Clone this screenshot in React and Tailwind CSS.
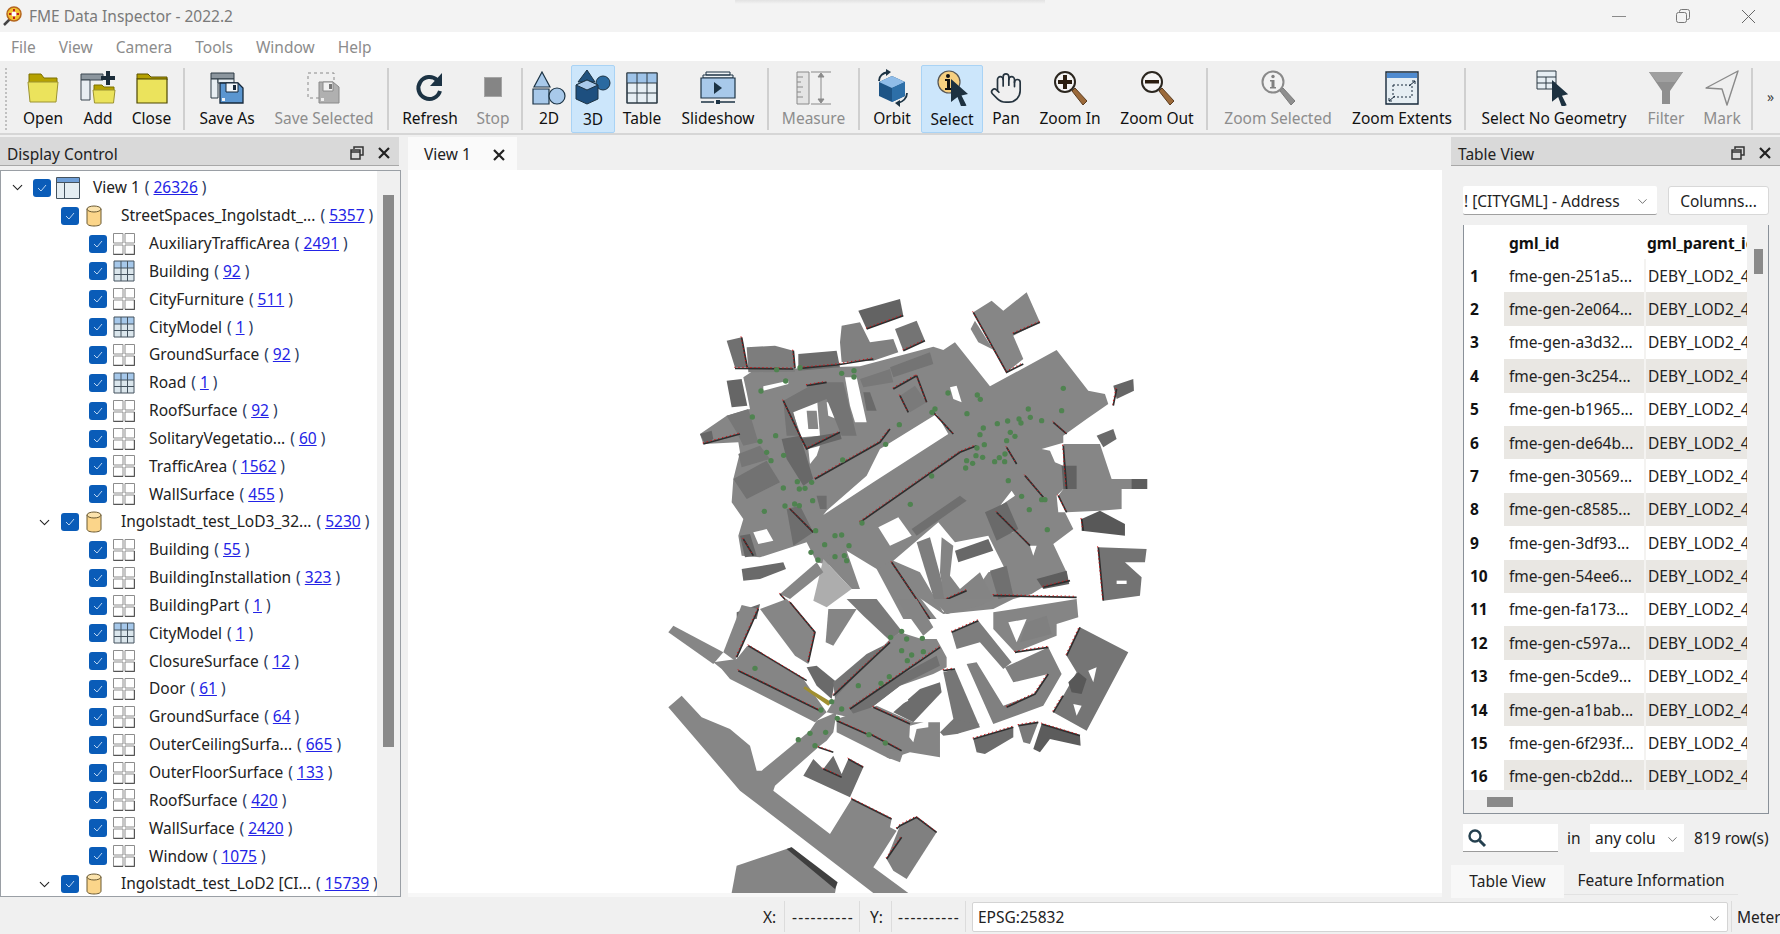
import { ChevronDown, Hand } from "lucide-react";

const dark = "#1c3344";

// toolbar icons
const FolderOpen = () => (
  <svg width="34" height="32" viewBox="0 0 34 32">
    <path d="M3 9V2h12l3 4h13v5H3z" fill="#b5a100" stroke="#7d7000" />
    <path d="M2 10h30l-2 20H4z" fill="#ebe35c" stroke="#9c9330" />
  </svg>
);
const FolderAdd = () => (
  <svg width="36" height="34" viewBox="0 0 36 34">
    <path d="M1 3h22v6H1z" fill="#8c969e" stroke="#3a4650" />
    <path d="M1 9h9v20H1z" fill="#e8eef2" stroke="#3a4650" />
    <path d="M14 18v-4h8l2 2h10v4H14z" fill="#b5a100" stroke="#7d7000" />
    <path d="M13 19h22l-1.5 13h-19z" fill="#ebe35c" stroke="#9c9330" />
    <path d="M26 0h4v5h5v4h-5v5h-4V9h-5V5h5z" fill="#1c2d3a" />
  </svg>
);
const FolderClose = () => (
  <svg width="32" height="32" viewBox="0 0 32 32">
    <path d="M1 7V2h11l3 3h16v3z" fill="#b5a100" stroke="#5c5200" />
    <path d="M1 7h30v24H1z" fill="#ebe35c" stroke="#4d4600" strokeWidth="1.2" />
  </svg>
);
const SaveAs = () => (
  <svg width="34" height="34" viewBox="0 0 34 34">
    <path d="M1 2h23v6H1z" fill="#8c969e" stroke="#2d3a45" />
    <path d="M1 8h7v19H1z" fill="#e8eef2" stroke="#2d3a45" />
    <path d="M8 8h16v4H8z" fill="#e8eef2" stroke="#2d3a45" />
    <path d="M10 12h18l5 5v15H10z" fill="#5b96d0" stroke="#16283a" strokeWidth="1.3" />
    <path d="M16 12h12v9H16z" fill="#f2f6f9" stroke="#16283a" />
    <path d="M23 14h3v5h-3z" fill="#16283a" />
    <path d="M12 27h3v3h-3z" fill="#eef3f7" />
  </svg>
);
const SaveSel = () => (
  <svg width="34" height="34" viewBox="0 0 34 34">
    <path d="M1 2h26v25H1z" fill="none" stroke="#8a8a8a" strokeDasharray="3 3" />
    <path d="M12 11h14l6 5v16H12z" fill="#b0b0b0" stroke="#8a8a8a" />
    <path d="M16 11h10v9H16z" fill="#f2f2f2" stroke="#8a8a8a" />
    <path d="M22 13h3v5h-3z" fill="#777" />
    <path d="M14 27h3v3h-3z" fill="#eee" />
  </svg>
);
const Refresh = () => (
  <svg width="30" height="32" viewBox="0 0 30 32">
    <path d="M22 8a11 11 0 1 0 3 11" fill="none" stroke={dark} strokeWidth="4" />
    <path d="M27 1v13H15z" fill={dark} />
  </svg>
);
const Stop = () => <div className="w-[18px] h-[20px] bg-[#858585] border border-[#a5a5a5] mt-[-2px]" />;
const Shapes = () => (
  <svg width="34" height="34" viewBox="0 0 34 34">
    <path d="M10 1l8 15H2z" fill="#a8c9ea" stroke={dark} strokeWidth="1.2" />
    <path d="M1 18h16v15H1z" fill="#a8c9ea" stroke={dark} strokeWidth="1.2" />
    <circle cx="25" cy="25" r="8" fill="#a8c9ea" stroke={dark} strokeWidth="1.2" />
  </svg>
);
const Shapes3d = () => (
  <svg width="36" height="36" viewBox="0 0 36 36">
    <path d="M12 1l8 12H3z" fill="#20527f" stroke={dark} />
    <circle cx="28" cy="14" r="7" fill="#2a6aa0" stroke={dark} />
    <path d="M12 11l11 5v14l-11 5-11-5V16z" fill="#1d4f7f" stroke={dark} />
    <path d="M12 11l11 5-11 5-11-5z" fill="#a8c9ea" stroke={dark} />
  </svg>
);
const TableIcon = () => (
  <svg width="32" height="32" viewBox="0 0 32 32">
    <path d="M1 1h30v30H1z" fill="#e6eef3" stroke="#2d3a45" strokeWidth="1.2" />
    <path d="M1 1h30v10H1z" fill="#9ec3e8" />
    <path d="M1 11h30M1 21h30M11 1v30M21 1v30M1 1h30v30H1z" fill="none" stroke="#2d3a45" />
  </svg>
);
const Slideshow = () => (
  <svg width="36" height="34" viewBox="0 0 36 34">
    <path d="M6 1h24v3H6zM3 4h30v3H3z" fill="#eef2f5" stroke="#1c3344" />
    <path d="M1 7h34v20H1z" fill="#a8c9ea" stroke="#1c3344" strokeWidth="1.2" />
    <path d="M14 11l8 6-8 6z" fill="#1c3344" />
    <path d="M1 31h13M20 31h15" stroke="#1c3344" strokeWidth="1.4" />
    <path d="M16 29h4v4h-4z" fill="#1c3344" />
  </svg>
);
const Measure = () => (
  <svg width="36" height="34" viewBox="0 0 36 34" stroke="#8a8a8a" fill="none">
    <path d="M1 1h12v32H1z" fill="#e4e4e4" />
    <path d="M1 6h6M1 11h4M1 16h6M1 21h4M1 26h6" />
    <path d="M15 1h20M15 33h20M25 3v28" />
    <path d="M22 6l3-4 3 4zM22 28l3 4 3-4z" fill="#8a8a8a" />
  </svg>
);
const Orbit = () => (
  <svg width="34" height="38" viewBox="0 0 34 38">
    <path d="M17 7l13 6v14l-13 6-13-6V13z" fill="#1d5486" />
    <path d="M17 7l13 6-13 6-13-6z" fill="#8fbce8" />
    <path d="M17 19l13-6v14l-13 6z" fill="#2d6fa8" />
    <path d="M4 12c0-5 4-8 9-9" fill="none" stroke={dark} strokeWidth="1.8" />
    <path d="M11 0l5 3-5 4z" fill={dark} />
    <path d="M32 24c0 5-4 9-9 10" fill="none" stroke={dark} strokeWidth="1.8" />
    <path d="M25 31l-5 3 5 4z" fill={dark} />
  </svg>
);
const Cursor = ({ x, y, s = 1 }) => (
  <path transform={`translate(${x} ${y}) scale(${s})`} d="M0 0l17 15-6.500 1.500 5 10-5 2-4-10.500-6.500 5z" fill="#1d3140" />
);
const SelectIcon = () => (
  <svg width="34" height="38" viewBox="0 0 34 38">
    <circle cx="14" cy="14" r="11" fill="#f6cf80" stroke="#555" strokeWidth="1.2" />
    <circle cx="13" cy="8" r="2" fill="#111" />
    <path d="M10 11h5v9h2v2h-7v-2h2v-7h-2z" fill="#111" />
    <Cursor x={16} y={11} />
  </svg>
);
const Glass = ({ sign }) => (
  <svg width="34" height="36" viewBox="0 0 34 36">
    <path d="M19 21l3-3 12 13-4 4z" fill="#9c6a3a" stroke="#5c3d20" />
    <circle cx="12" cy="12" r="10" fill="#f4f4f4" stroke="#2b261f" strokeWidth="2" />
    <path d={sign === "+" ? "M10 5h4v5h5v4h-5v5h-4v-5H5v-4h5z" : "M5 10h14v3.500H5z"} fill="#2b1d10" />
  </svg>
);
const GlassInfo = () => (
  <svg width="34" height="36" viewBox="0 0 34 36">
    <path d="M19 21l3-3 12 13-4 4z" fill="#8f8f8f" stroke="#7a7a7a" />
    <circle cx="12" cy="12" r="10.500" fill="#f2f2f2" stroke="#8a8a8a" strokeWidth="2" />
    <circle cx="12" cy="6.500" r="1.700" fill="#808080" />
    <path d="M9 10h4.500v7H15v1.500H9V17h1.500v-5.500H9z" fill="#808080" />
  </svg>
);
const Extents = () => (
  <svg width="34" height="34" viewBox="0 0 34 34">
    <path d="M1 1h32v32H1z" fill="#e6eef3" stroke="#16283a" strokeWidth="1.4" />
    <path d="M2 2h30v5H2z" fill="#4f8bd0" />
    <path d="M8 14h19v12H8z" fill="none" stroke="#16283a" strokeDasharray="2 2" />
    <path d="M24 15l6-5M27 10h3v3M10 25l-6 5M4 27v3h3" fill="none" stroke="#16283a" />
  </svg>
);
const NoGeom = () => (
  <svg width="36" height="36" viewBox="0 0 36 36">
    <path d="M1 1h19v18H1z" fill="#e6eef3" stroke="#2d3a45" />
    <path d="M1 7h19M1 13h19M10 7v12" stroke="#2d3a45" fill="none" />
    <Cursor x={16} y={10} s={0.95} />
  </svg>
);
const Funnel = () => (
  <svg width="34" height="34" viewBox="0 0 34 34">
    <path d="M0 1h34L21 20v13h-8V20z" fill="#8f8f8f" />
    <path d="M0 1h34l-8 10H8z" fill="#a0a0a0" />
  </svg>
);
const Mark = () => (
  <svg width="34" height="36" viewBox="0 0 34 36">
    <path d="M33 1L1 18l16 1 5 16z" fill="#efefef" stroke="#8a8a8a" strokeWidth="1.4" strokeLinejoin="round" />
  </svg>
);

const Sep = ({ className }) => (
  <div className={`flex justify-center shrink-0 ${className}`}>
    <div className="w-[2px] h-[62px] mt-[6px] bg-[#cfcfcf]" />
  </div>
);

const ToolButton = ({ label, icon, className, off, active }) => (
  <div className={`shrink-0 h-[68px] mt-[3px] flex flex-col items-center ${className} ${active ? "bg-[#cce6fb] border border-[#a9d3f5] rounded-[2px] pt-[2px]" : "pt-[3px] border border-transparent"}`}>
    <div className="h-[38px] flex items-center justify-center">{icon}</div>
    <span className={`text-[15.5px] leading-[22px] whitespace-nowrap ${active ? "mt-[2px]" : "mt-[0px]"} ${off ? "text-[#8d8d8d]" : "text-[#111]"}`}>{label}</span>
  </div>
);

const Toolbar = () => (
  <div className="h-[73px] flex bg-[#f0f0f0] border-b-2 border-[#d6d6d6] mt-[1px]">
    <div className="w-[18px] shrink-0 pl-[5px] pt-[6px]">
      <div className="h-[62px] w-0 border-l-2 border-dotted border-[#c0c0c0]" />
    </div>
    <ToolButton label="Open" icon={<FolderOpen />} className="w-[50px]" />
    <ToolButton label="Add" icon={<FolderAdd />} className="w-[60px]" />
    <ToolButton label="Close" icon={<FolderClose />} className="w-[47px]" />
    <Sep className="w-[18px]" />
    <ToolButton label="Save As" icon={<SaveAs />} className="w-[68px]" />
    <ToolButton label="Save Selected" icon={<SaveSel />} off className="w-[126px]" />
    <Sep className="w-[2px]" />
    <ToolButton label="Refresh" icon={<Refresh />} className="w-[82px]" />
    <ToolButton label="Stop" icon={<Stop />} off className="w-[44px]" />
    <Sep className="w-[14px]" />
    <ToolButton label="2D" icon={<Shapes />} className="w-[40px]" />
    <ToolButton label="3D" icon={<Shapes3d />} active className="w-[44px] ml-[2px]" />
    <ToolButton label="Table" icon={<TableIcon />} className="w-[54px]" />
    <ToolButton label="Slideshow" icon={<Slideshow />} className="w-[98px]" />
    <Sep className="w-[2px]" />
    <ToolButton label="Measure" icon={<Measure />} off className="w-[89px]" />
    <Sep className="w-[2px]" />
    <ToolButton label="Orbit" icon={<Orbit />} className="w-[58px] ml-[3px]" />
    <ToolButton label="Select" icon={<SelectIcon />} active className="w-[62px]" />
    <ToolButton label="Pan" icon={<Hand size={34} strokeWidth={1.2} color="#26343f" />} className="w-[46px]" />
    <ToolButton label="Zoom In" icon={<Glass sign="+" />} className="w-[82px]" />
    <ToolButton label="Zoom Out" icon={<Glass sign="-" />} className="w-[92px]" />
    <Sep className="w-[8px]" />
    <ToolButton label="Zoom Selected" icon={<GlassInfo />} off className="w-[134px]" />
    <ToolButton label="Zoom Extents" icon={<Extents />} className="w-[114px]" />
    <Sep className="w-[12px]" />
    <ToolButton label="Select No Geometry" icon={<NoGeom />} className="w-[166px]" />
    <ToolButton label="Filter" icon={<Funnel />} off className="w-[58px]" />
    <ToolButton label="Mark" icon={<Mark />} off className="w-[54px]" />
    <Sep className="w-[6px]" />
    <div className="flex-1 text-[14px] text-[#444] pt-[24px] pl-[12px]">»</div>
  </div>
);

// panel header, same for both docks
const DockButtons = () => (
  <div className="flex items-center gap-[14px]">
    <svg width="14" height="14" viewBox="0 0 14 14" fill="none" stroke="#333" strokeWidth="1.5">
      <path d="M4 3V1h9v8h-3" />
      <path d="M1 4h9v9H1z" />
      <path d="M1 6h9" />
    </svg>
    <svg width="12" height="12" viewBox="0 0 12 12" stroke="#222" strokeWidth="2.200">
      <path d="M1 1l10 10M11 1L1 11" />
    </svg>
  </div>
);

const DockHeader = ({ title }) => (
  <div className="h-[29px] bg-[#d9d9d9] border-b border-[#a8a8a8] flex items-center justify-between pt-[4px] pl-[7px] pr-[9px] text-[15.5px] text-[#222]">
    <span className="mt-[3px]">{title}</span>
    <DockButtons />
  </div>
);

const CheckBox = () => (
  <div className="w-[18px] h-[18px] shrink-0 rounded-[3px] bg-[#0a5cb8] flex items-center justify-center">
    <svg width="10" height="8" viewBox="0 0 10 8" fill="none" stroke="#bcd6f2" strokeWidth="1">
      <path d="M1 4l3 3 5-6" />
    </svg>
  </div>
);

const GridIcon = ({ filled }) =>
  filled ? (
    <svg width="22" height="22" viewBox="0 0 22 22">
      <path d="M1 1h20v20H1z" fill="#dbe6ec" />
      <path d="M1 1h20v7H1z" fill="#a6c8ea" />
      <path d="M1 1h20v20H1zM1 8h20M1 14.500h20M8 1v20M14.500 1v20" fill="none" stroke="#44525e" />
    </svg>
  ) : (
    <svg width="22" height="22" viewBox="0 0 22 22" fill="none" stroke="#8d8d8d">
      <path d="M.5.5h9.500v9.500H.5zM12 .5h9.500v9.500H12zM.5 12H10v9.500H.5zM12 12h9.500v9.500H12z" />
      <path d="M.5 21.500H10M12 21.500h9.500M21.500 12v9.500" stroke="#555" strokeWidth="1.400" />
    </svg>
  );

const ViewIcon = () => (
  <svg width="24" height="22" viewBox="0 0 24 22">
    <path d="M.5.5h23v21H.5z" fill="#e4edf2" stroke="#44525e" />
    <path d="M1 1h22v4H1z" fill="#6f9fd8" />
    <path d="M1 5.500h22M8.500 5.500V21" stroke="#44525e" fill="none" />
  </svg>
);

const DbIcon = () => (
  <svg width="16" height="22" viewBox="0 0 16 22">
    <path d="M1 4v14c0 2 3 3 7 3s7-1 7-3V4z" fill="#fbd58a" stroke="#6b5a33" />
    <ellipse cx="8" cy="4" rx="7" ry="3" fill="#fbe3ad" stroke="#6b5a33" />
  </svg>
);

const Count = ({ n }) => (
  <span className="text-[#2a3a5c] pl-[5px]">
    {"( "}
    <span className="text-[#2323e6] underline">{n}</span>
    {" )"}
  </span>
);

const TreeRow = ({ level, name, n, arrow, icon }) => (
  <div className="h-[27.85px] flex items-center whitespace-nowrap">
    <div className={`shrink-0 flex justify-center ${level === 0 ? "w-[32px]" : level === 1 ? "w-[60px] pl-[26px]" : "w-[88px]"}`}>
      {arrow && <ChevronDown size={17} strokeWidth={1.5} color="#222" />}
    </div>
    <CheckBox />
    <div className={`shrink-0 flex justify-center w-[42px] ${level === 1 ? "pr-[13px]" : "pr-[9px]"}`}>{icon}</div>
    <span className="text-[#222]">{name}</span>
    <Count n={n} />
  </div>
);

const groups = [
  { name: "StreetSpaces_Ingolstadt_...", n: "5357", arrow: false, items: [
    ["AuxiliaryTrafficArea", "2491"], ["Building", "92", 1], ["CityFurniture", "511"], ["CityModel", "1", 1],
    ["GroundSurface", "92"], ["Road", "1", 1], ["RoofSurface", "92"], ["SolitaryVegetatio...", "60"],
    ["TrafficArea", "1562"], ["WallSurface", "455"],
  ] },
  { name: "Ingolstadt_test_LoD3_32...", n: "5230", arrow: true, items: [
    ["Building", "55"], ["BuildingInstallation", "323"], ["BuildingPart", "1"], ["CityModel", "1", 1],
    ["ClosureSurface", "12"], ["Door", "61"], ["GroundSurface", "64"], ["OuterCeilingSurfa...", "665"],
    ["OuterFloorSurface", "133"], ["RoofSurface", "420"], ["WallSurface", "2420"], ["Window", "1075"],
  ] },
  { name: "Ingolstadt_test_LoD2 [CI...", n: "15739", arrow: true, items: [] },
];

const DisplayControl = () => (
  <div className="w-[401px] shrink-0 flex flex-col">
    <div className="pr-[2px]">
      <DockHeader title="Display Control" />
    </div>
    <div className="mt-[4px] h-[727px] bg-white border border-[#9a9fa5] flex overflow-hidden text-[15.5px]">
      <div className="w-[376px] pt-[3px] overflow-hidden">
        <TreeRow level={0} name="View 1" n="26326" arrow icon={<ViewIcon />} />
        {groups.map((g) => (
          <div key={g.name}>
            <TreeRow level={1} name={g.name} n={g.n} arrow={g.arrow} icon={<DbIcon />} />
            {g.items.map(([name, n, filled]) => (
              <TreeRow key={name + n} level={2} name={name} n={n} icon={<GridIcon filled={filled} />} />
            ))}
          </div>
        ))}
      </div>
      <div className="flex-1 bg-[#f0f0f0] pt-[24px] pl-[6px]">
        <div className="w-[11px] h-[552px] bg-[#8a8a8a]" />
      </div>
    </div>
  </div>
);

// ---- map, authored in crop coordinates (3x), two sheets
const streetsA = "250,295 275,278 420,268 600,262 820,203 850,213 885,190 990,322 1190,213 1285,335 1335,345 1345,375 1280,420 1210,470 1210,630 1190,650 1240,750 1180,795 1220,880 1115,945 1060,960 1000,990 850,1005 650,870 560,815 520,860 470,850 440,790 300,835 245,830 235,770 250,720 215,670 220,600 240,520 235,490 130,495 120,465 200,410 270,390 260,340";

const holesA = [
  "310,322 385,305 385,315 310,335",
  "395,392 470,345 480,470 425,475",
  "660,510 830,405 865,465 640,610 490,708 500,695 620,590",
  "555,295 590,295 620,430 585,430 570,380",
  "445,510 480,500 470,530 450,555",
  "655,745 715,715 755,770 690,800",
  "700,845 835,730 885,790 985,770 1015,830 1035,870 985,880 950,930 880,945 850,1000 780,880",
  "1005,700 1055,635 1065,650 985,705",
  "1145,510 1215,490 1210,560 1185,550 1170,515",
  "1290,430 1375,400 1380,450 1340,470 1300,460",
  "280,760 320,750 340,785 295,795",
  "1040,730 1060,720 1060,760 1040,760",
  "1110,800 1130,800 1120,830",
  "870,325 890,320 905,370 880,360",
  "500,370 535,370 530,420 505,410",
  "1190,650 1215,645 1220,700 1195,700",
];

const bldgA = [
  ["#636363", "595,95 720,60 730,110 620,150"],
  ["#808080", "545,140 600,130 630,190 700,180 715,220 640,245 545,250 540,190"],
  ["#747474", "705,150 770,125 795,185 730,215"],
  ["#868686", "940,100 995,65 1030,95 1100,40 1140,130 1060,170 1090,240 1040,280"],
  ["#868686", "932,150 945,125 1000,212 955,190"],
  ["#707070", "200,185 245,175 262,265 225,265"],
  ["#7d7d7d", "260,205 345,200 400,215 405,278 265,280"],
  ["#6c6c6c", "415,225 530,215 540,265 415,275"],
  ["#666666", "200,305 245,300 262,380 215,385"],
  ["#666666", "120,465 155,455 160,480 135,495"],
  ["#777777", "200,410 265,390 295,490 250,500 230,460"],
  ["#767676", "235,525 300,500 330,540 245,565"],
  ["#727272", "220,600 320,545 360,610 260,660"],
  ["#686868", "365,480 420,470 460,600 430,620 380,540"],
  ["#747474", "370,365 470,310 550,310 590,470 545,470 500,360 400,400 420,470 380,470"],
  ["#868686", "440,395 470,395 475,450 445,450"],
  ["#787878", "600,300 690,270 700,310 610,325"],
  ["#747474", "690,265 810,220 820,255 700,295"],
  ["#6a6a6a", "610,340 630,340 650,395 620,395"],
  ["#7a7a7a", "720,350 765,320 800,370 750,400"],
  ["#666666", "420,480 540,460 545,480 440,510"],
  ["#6d6d6d", "470,650 500,650 500,690 480,690"],
  ["#6e6e6e", "380,690 420,680 460,760 400,800"],
  ["#666666", "240,770 270,765 290,830 255,835"],
  ["#6a6a6a", "245,870 370,850 378,870 300,900 250,905"],
  ["#868686", "1210,495 1320,495 1355,600 1460,600 1460,630 1385,630 1385,690 1320,695 1220,700 1195,650 1210,630"],
  ["#626262", "1205,560 1250,560 1250,630 1210,630"],
  ["#5d5d5d", "1415,600 1462,600 1462,630 1415,630"],
  ["#585858", "1265,720 1320,695 1395,735 1395,770 1265,755"],
  ["#737373", "1315,805 1460,810 1455,850 1395,850 1445,895 1440,950 1330,965"],
  ["#ffffff", "1370,905 1400,905 1400,915 1370,915"],
  ["#666666", "1360,320 1420,300 1422,335 1370,360"],
  ["#6a6a6a", "1310,470 1360,450 1370,480 1330,505"],
  ["#6a6a6a", "975,700 1040,670 1075,750 1010,785"],
  ["#686868", "885,815 985,780 1000,815 895,850"],
  ["#7e7e7e", "770,790 810,775 860,960 825,970"],
  ["#848484", "845,775 880,800 870,890 900,930 960,880 1000,960 860,1005 840,880"],
  ["#707070", "990,875 1040,860 1060,950 1015,960"],
  ["#5e5e5e", "1130,900 1220,875 1228,915 1150,930"],
  ["#868686", "500,830 560,815 600,930 575,930 490,840"],
  ["#adadad", "460,965 490,840 575,930 500,985"],
  ["#868686", "360,945 470,850 490,880 390,960"],
  ["#868686", "650,870 695,845 830,1020 730,1020"],
  ["#6f6f6f", "755,750 900,650 920,665 770,770"],
  ["#6a6a6a", "230,1000 300,975 290,1020 230,1020"],
];

const edgesA = [
  "940,100 1040,280 1090,255",
  "1060,165 1140,130",
  "245,175 262,265",
  "225,268 400,270",
  "400,215 405,268",
  "420,268 530,258 640,240",
  "620,150 730,110",
  "730,215 795,185",
  "370,365 420,470 440,510 540,460",
  "440,320 500,310",
  "465,600 660,490 690,450",
  "600,730 900,520 950,500",
  "130,495 240,465",
  "720,350 745,400",
  "770,290 800,370",
  "700,330 770,290",
  "820,400 880,465",
  "1040,505 1070,555",
  "1095,590 1150,655",
  "1195,650 1220,700",
  "1010,700 1110,800",
  "840,970 920,935",
  "1000,950 1250,955",
  "1210,500 1220,630",
  "1315,805 1330,965",
  "1265,720 1270,755",
  "250,780 280,830",
  "390,690 460,760",
  "1180,430 1220,465",
  "1370,330 1360,380",
  "1150,925 1230,905",
  "695,850 810,1020",
  "360,945 430,1020",
];

const dotsA = [
  [350,272],[420,266],[545,283],[582,275],[582,294],[377,306],[303,336],[277,414],[347,470],[300,487],[371,529],[333,545],[320,520],
  [412,608],[418,630],[435,628],[455,610],[370,627],[375,681],[404,675],[418,680],[313,697],[458,665],[467,755],[525,770],[545,768],
  [494,797],[453,820],[474,843],[525,833],[553,830],[560,845],[567,800],[606,732],[751,676],[815,591],[548,543],[677,496],[718,437],
  [816,400],[825,390],[864,342],[921,404],[952,348],[961,361],[970,447],[960,467],[1012,434],[1043,426],[1077,420],[1083,432],[1111,415],
  [1105,390],[1145,425],[1205,395],[1210,328],[1051,460],[1065,472],[1040,485],[973,497],[951,507],[968,535],[948,530],[938,553],
  [920,545],[917,567],[1004,548],[1018,536],[1035,525],[1034,548],[1045,605],[1085,652],[1108,692],[1145,662],[1155,662],[1162,752],
];

const bldgB = [
  ["#868686", "25,100 40,80 190,160 160,195"],
  ["#868686", "190,160 245,18 295,30 225,185"],
  ["#868686", "300,30 380,0 390,10 465,100 445,195 405,170"],
  ["#858585", "160,190 230,180 262,140 430,240 500,340 465,370 210,240 185,210"],
  ["#868686", "25,325 65,290 125,355 210,390 270,440 290,515 305,515 450,395 470,365 530,340 520,400 500,425 480,440 345,560 340,575 510,705 575,600 695,660 690,685 710,695 640,805 745,882 640,882 240,575"],
  ["#858585", "215,882 230,800 395,745 530,855 525,882"],
  ["#3f3f3f", "380,750 395,745 533,850 525,870"],
  ["#808080", "680,780 720,680 770,655 830,700 740,840 700,815"],
  ["#6c6c6c", "430,530 460,480 490,510 520,470 545,525 565,480 610,505 570,595"],
  ["#6a6a6a", "440,205 470,200 525,245 515,300 470,260"],
  ["#757575", "520,250 620,165 690,130 720,150 600,260 525,300"],
  ["#7a7a7a", "560,0 650,0 725,95 690,125 610,50"],
  ["#868686", "500,340 530,290 690,120 720,100 785,120 830,120 860,175 860,205 820,225 720,260 590,360"],
  ["#707070", "570,330 700,240 830,170 840,200 720,260 590,360"],
  ["#858585", "530,360 650,320 760,370 840,370 840,475 750,460 690,480 530,400"],
  ["#858585", "680,450 730,460 720,490 680,475"],
  ["#6d6d6d", "700,340 780,270 840,250 845,280 760,370"],
  ["#858585", "815,0 1000,0 960,20 860,45"],
  ["#858585", "710,0 770,0 820,85 790,110"],
  ["#858585", "505,30 590,30 520,140 497,130"],
  ["#7d7d7d", "875,100 955,65 1055,190 1030,210 960,130 890,150"],
  ["#858585", "1000,40 1250,0 1255,55 1190,75 1190,110 1065,160 1000,90"],
  ["#ffffff", "1045,70 1100,60 1070,130"],
  ["#808080", "1100,70 1160,50 1175,105 1080,130"],
  ["#808080", "920,195 950,190 1030,320 1125,285 1165,225 1060,250 1035,205 1165,145 1205,225 1150,320 1000,375"],
  ["#767676", "850,220 885,210 960,385 890,405"],
  ["#6c6c6c", "940,420 1060,385 1060,415 975,465 950,460"],
  ["#7a7a7a", "1075,380 1135,370 1110,435 1090,430"],
  ["#5c5c5c", "1120,450 1145,375 1260,410 1262,440 1170,420 1140,460"],
  ["#757575", "1220,170 1260,85 1405,160 1280,395 1180,340 1210,290 1250,220"],
  ["#585858", "1225,250 1255,220 1280,240 1265,285 1235,280"],
  ["#ffffff", "1285,215 1310,205 1300,250"],
  ["#ffffff", "1240,315 1265,320 1250,350"],
  ["#ffffff", "750,380 805,365 805,385 770,390 760,430 748,415"],
  ["#ffffff", "705,290 730,275 745,305 725,315"],
  ["#767676", "840,400 880,360 960,375 890,405 850,410"],
  ["#a08f30", "430,268 435,262 515,310 505,320"],
];

const edgesB = [
  "295,30 230,175",
  "390,10 465,100 445,190",
  "265,140 440,245",
  "235,215 480,335",
  "530,365 620,405",
  "520,290 690,130",
  "570,330 840,145",
  "640,325 750,375",
  "850,215 885,210",
  "875,100 955,65",
  "1065,160 1165,145",
  "1040,325 1125,285 1165,225",
  "940,420 1060,385",
  "1075,380 1135,370",
  "1145,375 1260,410",
  "1220,170 1260,85",
  "1180,340 1210,290",
  "575,600 695,660",
  "710,690 720,680 770,655 830,700",
  "680,780 725,715",
  "490,510 545,535",
  "565,480 610,505",
  "475,445 520,460",
  "630,405 725,455",
];

const dotsB = [
  [725,97],[692,115],[740,120],[787,118],[725,155],[790,158],[755,168],[742,185],[688,233],[663,253],[595,260],[515,308],[545,330],[483,333],
  [532,358],[497,400],[450,403],[415,422],[465,440],[627,407],[676,432],[285,208],
];

const MapSheet = ({ x, y, streets, holes = [], bldg, edges, dots }) => (
  <g transform={`translate(${x} ${y}) scale(0.3333)`}>
    {streets && <polygon points={streets} fill="#868686" />}
    {holes.map((p) => <polygon key={p} points={p} fill="#fff" />)}
    {bldg.map(([c, p]) => <polygon key={p} points={p} fill={c} />)}
    {edges.map((p) => <polyline key={p} points={p} fill="none" stroke="#2e2e2e" strokeWidth="5" />)}
    {edges.map((p) => <polyline key={p + "r"} points={p} transform="translate(-2 -3)" fill="none" stroke="#d01418" strokeWidth="3" strokeDasharray="4 8" />)}
    {dots.map(([cx, cy]) => <circle key={cx + "-" + cy} cx={cx} cy={cy} r="8" fill="#4f8350" />)}
  </g>
);

const CityMap = () => (
  <svg className="block w-full h-full" viewBox="408 171 1034 723">
    <MapSheet x={660} y={280} streets={streetsA} holes={holesA} bldg={bldgA} edges={edgesA} dots={dotsA} />
    <MapSheet x={660} y={600} bldg={bldgB} edges={edgesB} dots={dotsB} />
  </svg>
);

const CenterView = () => (
  <div className="w-[1034px] ml-[7px] shrink-0 flex flex-col">
    <div className="h-[33px] w-[109px] bg-[#fafafa] flex items-center pl-[16px] pt-[2px] text-[15.5px] text-[#222]">
      <span className="w-[69px]">View 1</span>
      <svg width="12" height="12" viewBox="0 0 12 12" stroke="#222" strokeWidth="2.200">
        <path d="M1 1l10 10M11 1L1 11" />
      </svg>
    </div>
    <div className="h-[723px] bg-white">
      <CityMap />
    </div>
    <div className="h-[4px] bg-[#f7f7f7]" />
  </div>
);

const rows = [
  "251a5", "2e064", "a3d32", "3c254", "b1965", "de64b", "30569", "c8585",
  "3df93", "54ee6", "fa173", "c597a", "5cde9", "a1bab", "6f293f", "cb2dd",
];

const TableView = () => (
  <div className="w-[329px] shrink-0 ml-[9px] flex flex-col text-[15.5px] text-[#222]">
    <DockHeader title="Table View" />
    <div className="pl-[12px] pr-[11px] flex-1 flex flex-col">
      <div className="flex mt-[20px] h-[29px] gap-[11px]">
        <div className="w-[194px] bg-white border-b border-[#a0a0a0] flex items-center justify-between pt-[3px] pr-[7px] rounded-[2px] overflow-hidden">
          <span className="whitespace-nowrap pl-[1px]">! [CITYGML] - Address</span>
          <ChevronDown size={15} strokeWidth={1.3} color="#555" className="shrink-0" />
        </div>
        <div className="flex-1 bg-white border border-[#d8d8d8] rounded-[3px] flex items-center justify-center pt-[2px]">Columns...</div>
      </div>
      <div className="mt-[10px] h-[589px] border-x border-b border-[#8a9199] flex flex-col">
        <div className="flex h-[565px]">
          <div className="w-[283px] bg-white">
            <div className="h-[34px] flex items-center font-bold text-[#111] pt-[4px]">
              <div className="w-[40px] shrink-0" />
              <div className="w-[140px] shrink-0 pl-[5px]">gml_id</div>
              <div className="w-[103px] shrink-0 pl-[3px] overflow-hidden whitespace-nowrap">gml_parent_id</div>
            </div>
            {rows.map((r, i) => (
              <div key={r} className="h-[33.4px] flex items-center">
                <div className="w-[40px] shrink-0 pl-[6px] pt-[1px] font-bold text-[#111]">{i + 1}</div>
                <div className={`w-[243px] shrink-0 h-full flex items-center overflow-hidden ${i % 2 ? "bg-[#e9e7e3]" : "bg-white"}`}>
                  <div className="w-[140px] pl-[5px] pt-[1px] shrink-0 whitespace-nowrap">fme-gen-{r}...</div>
                  <div className="w-[103px] pl-[2px] pt-[1px] shrink-0 h-full flex items-center border-l-2 border-[#f4f3f1] overflow-hidden whitespace-nowrap">DEBY_LOD2_4906</div>
                </div>
              </div>
            ))}
          </div>
          <div className="flex-1 bg-[#f0f0f0] pl-[7px] pt-[24px]">
            <div className="w-[9px] h-[25px] bg-[#8a8a8a]" />
          </div>
        </div>
        <div className="flex-1 bg-[#f0f0f0] pl-[23px] pt-[7px]">
          <div className="w-[26px] h-[10px] bg-[#8a8a8a]" />
        </div>
      </div>
      <div className="flex items-center mt-[10px] h-[28px] whitespace-nowrap">
        <div className="w-[95px] h-full bg-white border-b border-[#9a9a9a] flex items-center pl-[4px]">
          <svg width="20" height="20" viewBox="0 0 20 20" fill="none" stroke="#25404f" strokeWidth="2.400">
            <circle cx="8" cy="8" r="5.500" />
            <path d="M12.500 12.500L18 18" strokeWidth="3" />
          </svg>
        </div>
        <span className="ml-[9px] w-[23px] pt-[2px]">in</span>
        <div className="w-[94px] h-full bg-white flex items-center justify-between pl-[5px] pr-[4px] pt-[2px]">
          <span>any colu</span>
          <ChevronDown size={15} strokeWidth={1.3} color="#555" />
        </div>
        <span className="ml-[10px] pt-[2px]">819 row(s)</span>
      </div>
    </div>
    <div className="flex h-[33px] mt-[13px]">
      <div className="w-[113px] bg-[#f8f8f8] flex items-center justify-center pt-[1px]">Table View</div>
      <div className="w-[174px] h-[30px] bg-[#f0f0f0] border-b border-[#e2e2e2] flex items-center justify-center pt-[3px]">Feature Information</div>
    </div>
  </div>
);

const StatusBar = () => (
  <div className="flex h-[35px] items-center text-[15.5px] text-[#222] whitespace-nowrap overflow-hidden">
    <div className="w-[763px] shrink-0" />
    <span className="w-[21px] shrink-0 pt-[3px]">X:</span>
    <div className="w-[76px] shrink-0 h-[31px] flex items-center border-x border-[#dcdcdc] pl-[7px] pt-[3px] tracking-[1.2px]">----------</div>
    <span className="w-[31px] shrink-0 pl-[10px] pt-[3px]">Y:</span>
    <div className="w-[75px] shrink-0 h-[31px] flex items-center border-x border-[#dcdcdc] pl-[6px] pt-[3px] tracking-[1.2px]">----------</div>
    <div className="w-[756px] shrink-0 ml-[6px] h-[30px] bg-white border border-[#d4d4d4] rounded-[2px] flex items-center justify-between pt-[3px] pl-[5px] pr-[5px]">
      <span>EPSG:25832</span>
      <ChevronDown size={15} strokeWidth={1.3} color="#555" />
    </div>
    <div className="ml-[3px] shrink-0 h-[31px] flex items-center border-l border-[#dcdcdc] pl-[5px] pt-[3px]">Meters</div>
  </div>
);

const App = () => (
  <div className="w-[1780px] h-[934px] overflow-hidden bg-[#f0f0f0] relative font-['Noto_Sans',sans-serif]">
    <div className="absolute top-0 left-[735px] w-[310px] h-[4px] bg-gradient-to-b from-[#e2e2e2] to-transparent" />
    <div className="h-[32px] bg-[#f3f3f3] flex items-center text-[15.5px] text-[#7a7a7a]">
      <svg className="ml-[2px]" width="22" height="22" viewBox="0 0 22 22">
        <path d="M2 20l6-6" stroke="#444" strokeWidth="2.500" />
        <circle cx="12" cy="9" r="7" fill="#f2c230" stroke="#b5651d" strokeWidth="1.500" />
        <path d="M7 9h10M12 4v10" stroke="#c0201c" strokeWidth="2" />
        <circle cx="12" cy="9" r="2.500" fill="#fff" />
      </svg>
      <span className="ml-[5px] pt-[2px]">FME Data Inspector - 2022.2</span>
      <div className="ml-auto flex items-center">
        <div className="w-[14px] h-px bg-[#8a8a8a] mr-[50px]" />
        <svg className="mr-[51px]" width="14" height="14" viewBox="0 0 14 14" fill="none" stroke="#777">
          <path d="M3.500 3V2.500a2 2 0 0 1 2-2h6a2 2 0 0 1 2 2v6a2 2 0 0 1-2 2H11" />
          <rect x=".5" y="3.500" width="10" height="10" rx="2" />
        </svg>
        <svg className="mr-[24px]" width="15" height="15" viewBox="0 0 15 15" stroke="#666">
          <path d="M1 1l13 13M14 1L1 14" />
        </svg>
      </div>
    </div>
    <div className="h-[29px] bg-white flex items-center pt-[2px] text-[15.5px] text-[#8c8c8c]">
      <span className="ml-[11px]">File</span>
      <span className="ml-[23px]">View</span>
      <span className="ml-[23px]">Camera</span>
      <span className="ml-[23px]">Tools</span>
      <span className="ml-[23px]">Window</span>
      <span className="ml-[23px]">Help</span>
    </div>
    <Toolbar />
    <div className="flex mt-[1px] pt-[1px]">
      <DisplayControl />
      <CenterView />
      <TableView />
    </div>
    <div className="absolute left-0 right-0 bottom-0">
      <StatusBar />
    </div>
  </div>
);

export default App;
